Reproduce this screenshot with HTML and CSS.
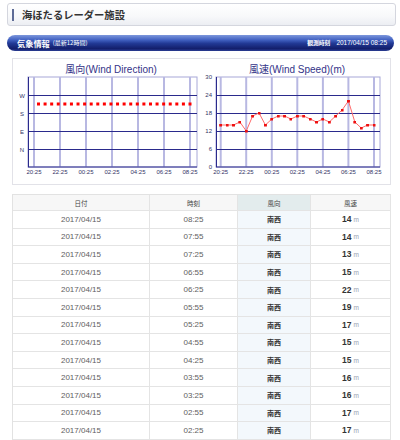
FILE: index.html
```html
<!DOCTYPE html>
<html lang="ja">
<head>
<meta charset="utf-8">
<title>海ほたるレーダー施設</title>
<link rel="stylesheet" href="styles.css">
</head>
<body>
<div class="page">
  <div class="title"><span class="title-mark"></span><h1>海ほたるレーダー施設</h1></div>
  <div class="bar">
    <div class="bar-left"><span class="bar-title">気象情報</span><span class="bar-sub">(最新12時間)</span></div>
    <div class="bar-time"><span class="bar-time-label">観測時刻</span><span class="bar-time-val">2017/04/15 08:25</span></div>
  </div>
  <div class="panel">
    <svg class="charts" width="377" height="125" viewBox="13 58 377 125" xmlns="http://www.w3.org/2000/svg">
      <defs>
        <marker id="sq" markerWidth="3" markerHeight="3" refX="1.5" refY="1.5" markerUnits="userSpaceOnUse">
          <rect width="3" height="3" fill="#ee1111"/>
        </marker>
      </defs>
      <g class="chart-title">
        <text x="111" y="72" text-anchor="middle">風向(Wind Direction)</text>
        <text x="297" y="72" text-anchor="middle">風速(Wind Speed)(m)</text>
      </g>
      <!-- left chart -->
      <rect x="28" y="76" width="169" height="90" fill="#fff" stroke="#a8a8d8" stroke-width="1"/>
      <g stroke="#b8b8e2" stroke-width="2">
        <line x1="34" y1="76" x2="34" y2="166"/>
        <line x1="60" y1="76" x2="60" y2="166"/>
        <line x1="86" y1="76" x2="86" y2="166"/>
        <line x1="112" y1="76" x2="112" y2="166"/>
        <line x1="138" y1="76" x2="138" y2="166"/>
        <line x1="164" y1="76" x2="164" y2="166"/>
        <line x1="190" y1="76" x2="190" y2="166"/>
      </g>
      <g stroke="#2a2a8c" stroke-width="1">
        <line x1="28" y1="94.5" x2="197" y2="94.5"/>
        <line x1="28" y1="112.5" x2="197" y2="112.5"/>
        <line x1="28" y1="130.5" x2="197" y2="130.5"/>
        <line x1="28" y1="148.5" x2="197" y2="148.5"/>
        <line x1="28" y1="166" x2="197" y2="166"/>
        <line x1="28.5" y1="76" x2="28.5" y2="166"/>
      </g>
      <line x1="37" y1="103" x2="191.5" y2="103" stroke="#ff0000" stroke-width="3" stroke-dasharray="3 3.587"/>
      <g class="axis-label" text-anchor="middle">
        <text x="22" y="96.5">W</text>
        <text x="22" y="114.5">S</text>
        <text x="22" y="132.5">E</text>
        <text x="22" y="150.5">N</text>
      </g>
      <g class="axis-label" text-anchor="middle">
        <text x="34" y="173">20:25</text>
        <text x="60" y="173">22:25</text>
        <text x="86" y="173">00:25</text>
        <text x="112" y="173">02:25</text>
        <text x="138" y="173">04:25</text>
        <text x="164" y="173">06:25</text>
        <text x="190" y="173">08:25</text>
      </g>
      <!-- right chart -->
      <rect x="216" y="76" width="164" height="90" fill="#fff" stroke="#a8a8d8" stroke-width="1"/>
      <g stroke="#b8b8e2" stroke-width="2">
        <line x1="220.7" y1="76" x2="220.7" y2="166"/>
        <line x1="246.2" y1="76" x2="246.2" y2="166"/>
        <line x1="271.8" y1="76" x2="271.8" y2="166"/>
        <line x1="297.3" y1="76" x2="297.3" y2="166"/>
        <line x1="322.9" y1="76" x2="322.9" y2="166"/>
        <line x1="348.4" y1="76" x2="348.4" y2="166"/>
        <line x1="374" y1="76" x2="374" y2="166"/>
      </g>
      <g stroke="#2a2a8c" stroke-width="1">
        <line x1="216" y1="94.5" x2="380" y2="94.5"/>
        <line x1="216" y1="112.5" x2="380" y2="112.5"/>
        <line x1="216" y1="130.5" x2="380" y2="130.5"/>
        <line x1="216" y1="148.5" x2="380" y2="148.5"/>
        <line x1="216" y1="166" x2="380" y2="166"/>
        <line x1="216.5" y1="76" x2="216.5" y2="166"/>
      </g>
      <polyline fill="none" stroke="#ff6a6a" stroke-width="1" marker-start="url(#sq)" marker-mid="url(#sq)" marker-end="url(#sq)"
        points="220.70,124 227.09,124 233.48,124 239.86,121 246.25,130 252.64,115 259.03,112 265.41,124 271.80,118 278.19,115 284.58,115 290.96,118 297.35,115 303.74,115 310.13,118 316.51,121 322.90,118 329.29,121 335.68,115 342.06,109 348.45,100 354.84,121 361.23,127 367.61,124 374.00,124"/>
      <g class="axis-label" text-anchor="end">
        <text x="212" y="78">30</text>
        <text x="212" y="96">24</text>
        <text x="212" y="114">18</text>
        <text x="212" y="132">12</text>
        <text x="212" y="150">6</text>
        <text x="212" y="168">0</text>
      </g>
      <g class="axis-label" text-anchor="middle">
        <text x="220.7" y="173">20:25</text>
        <text x="246.2" y="173">22:25</text>
        <text x="271.8" y="173">00:25</text>
        <text x="297.3" y="173">02:25</text>
        <text x="322.9" y="173">04:25</text>
        <text x="348.4" y="173">06:25</text>
        <text x="374" y="173">08:25</text>
      </g>
    </svg>
  </div>
  <div class="tbl">
    <div class="c h">日付</div><div class="c h">時刻</div><div class="c h dir">風向</div><div class="c h">風速</div>
    <div class="c">2017/04/15</div><div class="c">08:25</div><div class="c dir">南西</div><div class="c spd"><b>14</b><span class="u">m</span></div>
    <div class="c">2017/04/15</div><div class="c">07:55</div><div class="c dir">南西</div><div class="c spd"><b>14</b><span class="u">m</span></div>
    <div class="c">2017/04/15</div><div class="c">07:25</div><div class="c dir">南西</div><div class="c spd"><b>13</b><span class="u">m</span></div>
    <div class="c">2017/04/15</div><div class="c">06:55</div><div class="c dir">南西</div><div class="c spd"><b>15</b><span class="u">m</span></div>
    <div class="c">2017/04/15</div><div class="c">06:25</div><div class="c dir">南西</div><div class="c spd"><b>22</b><span class="u">m</span></div>
    <div class="c">2017/04/15</div><div class="c">05:55</div><div class="c dir">南西</div><div class="c spd"><b>19</b><span class="u">m</span></div>
    <div class="c">2017/04/15</div><div class="c">05:25</div><div class="c dir">南西</div><div class="c spd"><b>17</b><span class="u">m</span></div>
    <div class="c">2017/04/15</div><div class="c">04:55</div><div class="c dir">南西</div><div class="c spd"><b>15</b><span class="u">m</span></div>
    <div class="c">2017/04/15</div><div class="c">04:25</div><div class="c dir">南西</div><div class="c spd"><b>15</b><span class="u">m</span></div>
    <div class="c">2017/04/15</div><div class="c">03:55</div><div class="c dir">南西</div><div class="c spd"><b>16</b><span class="u">m</span></div>
    <div class="c">2017/04/15</div><div class="c">03:25</div><div class="c dir">南西</div><div class="c spd"><b>16</b><span class="u">m</span></div>
    <div class="c">2017/04/15</div><div class="c">02:55</div><div class="c dir">南西</div><div class="c spd"><b>17</b><span class="u">m</span></div>
    <div class="c">2017/04/15</div><div class="c">02:25</div><div class="c dir">南西</div><div class="c spd"><b>17</b><span class="u">m</span></div>
  </div>
</div>
</body>
</html>
```
FILE: styles.css
```css
body {
  margin: 0;
  background: #fff;
  font-family: "Liberation Sans", "Noto Sans CJK JP", sans-serif;
}
.page {
  padding-top: 3px;
}
.title {
  margin-left: 7px;
  width: 389px;
  height: 23px;
  box-sizing: border-box;
  border: 1px solid #d4d6de;
  border-radius: 3px;
  background: linear-gradient(#ffffff, #f7f8fa 60%, #eceef3);
  display: flex;
  align-items: center;
}
.title-mark {
  width: 2px;
  height: 12px;
  margin-left: 4px;
  background: #5e6c96;
}
.title h1 {
  margin: 0 0 0 8px;
  font-size: 10.3px;
  font-weight: bold;
  color: #333;
  font-family: "Noto Sans CJK JP", sans-serif;
}
.bar {
  margin: 9px 0 0 7px;
  width: 387px;
  height: 16px;
  box-sizing: border-box;
  padding: 0 7px 0 10px;
  border-radius: 8px;
  background: linear-gradient(#7d97dc 0%, #4262c2 30%, #223a96 52%, #131f6c 85%, #2a3d94 100%);
  display: flex;
  align-items: center;
  justify-content: space-between;
  color: #fff;
  font-family: "Noto Sans CJK JP", sans-serif;
}
.bar-left,
.bar-time {
  display: flex;
  align-items: center;
  line-height: 1;
}
.bar-title {
  font-size: 8.2px;
  font-weight: bold;
}
.bar-sub {
  font-size: 6px;
  margin-left: 3px;
}
.bar-time-label {
  font-size: 5.8px;
  font-weight: bold;
  margin-right: 6px;
}
.bar-time-val {
  font-size: 6.5px;
  font-family: "Liberation Sans", sans-serif;
}
.panel {
  margin: 7px 0 0 12px;
  width: 379px;
  height: 127px;
  box-sizing: border-box;
  border: 1px solid #e2e2e8;
}
.charts {
  display: block;
  font-family: "Liberation Sans", "Noto Sans CJK JP", sans-serif;
}
.chart-title text {
  font-size: 10px;
  fill: #333388;
}
.axis-label text {
  font-size: 6px;
  fill: #333366;
}
.tbl {
  margin: 9px 0 0 12px;
  width: 379px;
  box-sizing: border-box;
  display: grid;
  grid-template-columns: 137px 88px 73px 80px;
  grid-template-rows: 16px;
  grid-auto-rows: 17.6px;
  border-left: 1px solid #e2e2e2;
  border-top: 1px solid #e2e2e2;
}
.c {
  box-sizing: border-box;
  border-right: 1px solid #e4e4e4;
  border-bottom: 1px solid #e4e4e4;
  display: flex;
  align-items: center;
  justify-content: center;
  font-size: 8px;
  color: #606060;
}
.c.dir {
  background: #f3f8fc;
  font-weight: bold;
  color: #333;
  font-size: 7px;
  font-family: "Noto Sans CJK JP", sans-serif;
}
.c.h {
  background: #f7f7f7;
  font-size: 6.5px;
  color: #444;
  font-weight: normal;
  font-family: "Noto Sans CJK JP", sans-serif;
}
.c.h.dir {
  background: #e3eced;
}
.spd b {
  font-size: 8.5px;
  color: #333;
}
.spd .u {
  font-size: 6.5px;
  color: #9aa0b0;
  margin-left: 2px;
}
```
